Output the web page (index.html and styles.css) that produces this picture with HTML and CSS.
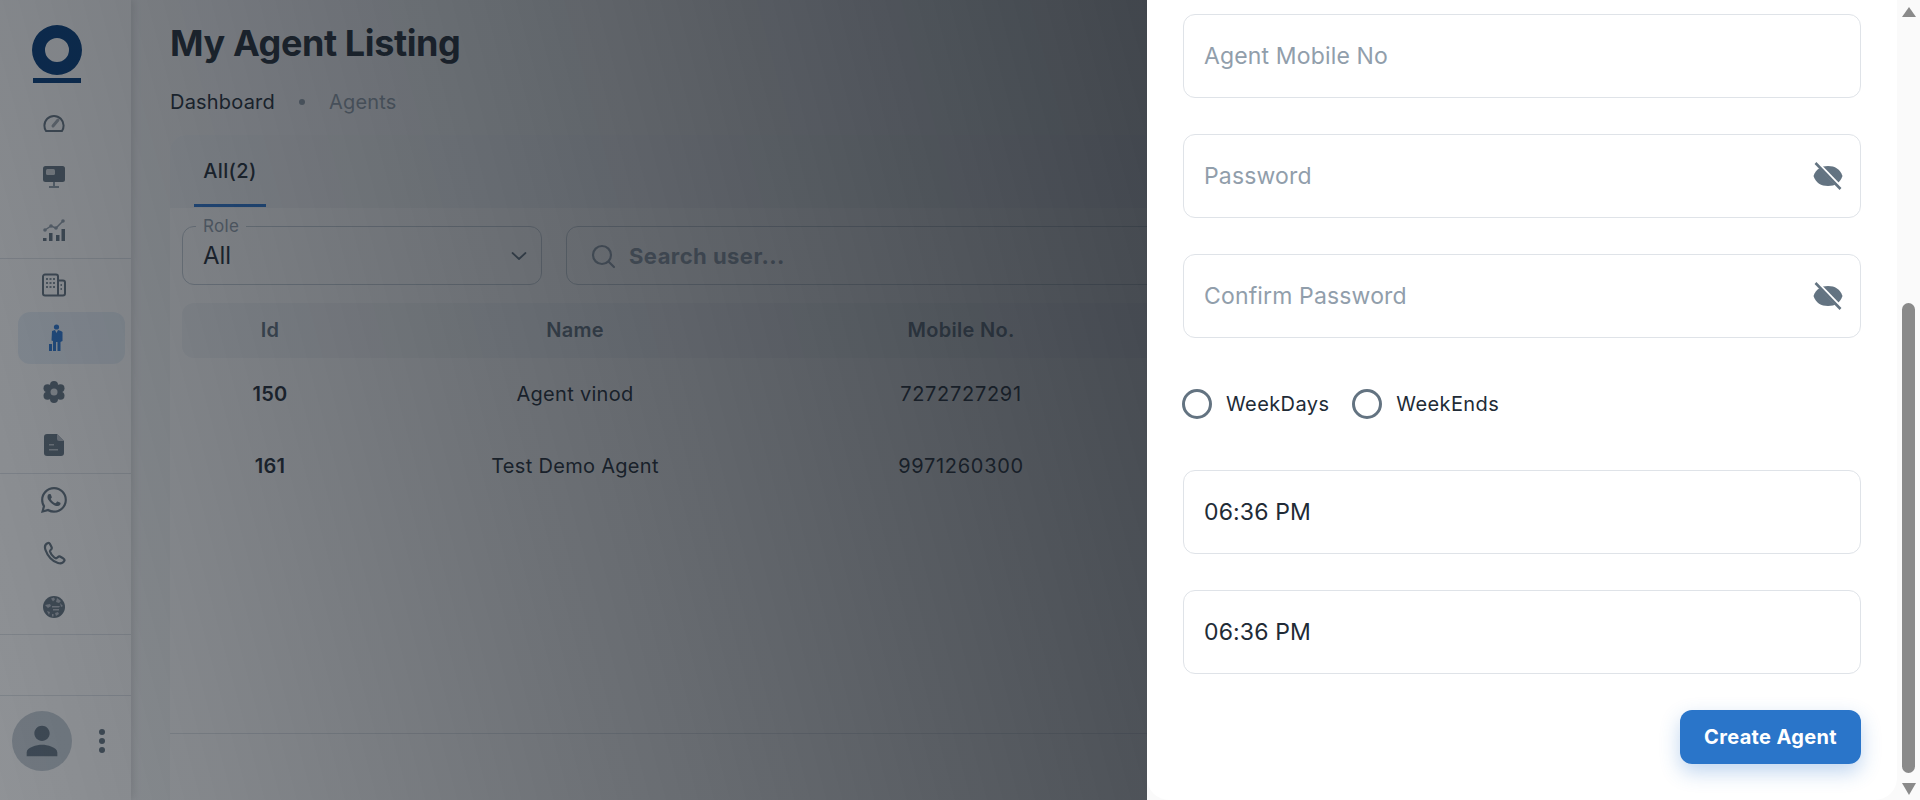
FILE: index.html
```html
<!DOCTYPE html>
<html lang="en">
<head>
    <meta charset="UTF-8">
    <meta name="viewport" content="width=device-width, initial-scale=1.0">
    <title>My Agent Listing</title>
    <link rel="stylesheet" href="styles.css">
</head>
<body>
    <div class="app">
        <aside class="sidebar">
            <div class="logo">
                <svg width="50" height="58" viewBox="0 0 50 58">
                    <path fill-rule="evenodd" d="M25 0a25 25 0 1 0 0 50a25 25 0 1 0 0-50zM25 13a12 12 0 1 1 0 24a12 12 0 1 1 0-24z"/>
                    <rect x="1" y="53" width="48" height="5"/>
                </svg>
            </div>

            <nav class="nav-group">
                <a class="nav-item">
                    <svg width="24" height="24" viewBox="0 0 24 24" fill="none" stroke="currentColor" stroke-width="2" stroke-linecap="round">
                        <path d="M4 20h16c1.2-1.6 1.6-3.6 1.6-5.4A9.6 9.6 0 1 0 2.4 14.6c0 1.8.4 3.800 1.600 5.400z"/>
                        <path d="M11 15l5-6" stroke="#a0a8b2" stroke-width="3"/>
                    </svg>
                </a>
                <a class="nav-item">
                    <svg width="24" height="24" viewBox="0 0 24 24">
                        <rect x="1" y="1" width="22" height="16" rx="2.500" fill="currentColor"/>
                        <rect x="4" y="4" width="9" height="6" rx="1.500" fill="#fff" opacity=".7"/>
                        <path d="M11 17h2v4h4v2H7v-2h4z" fill="#919eab"/>
                    </svg>
                </a>
                <a class="nav-item">
                    <svg width="24" height="24" viewBox="0 0 24 24">
                        <path d="M3 12l6-4 5 2 7-7" fill="none" stroke="#919eab" stroke-width="1.500"/>
                        <circle cx="3" cy="12" r="1.800" fill="#919eab"/><circle cx="9" cy="8" r="1.800" fill="#919eab"/>
                        <circle cx="14" cy="10" r="1.800" fill="#919eab"/><circle cx="21" cy="3" r="1.800" fill="#919eab"/>
                        <path d="M1 20h3.500v3H1zM7 15h3.500v8H7zM14 17h3.500v6H14zM19.500 11H23v12h-3.500z" fill="currentColor"/>
                    </svg>
                </a>
            </nav>

            <nav class="nav-group">
                <a class="nav-item">
                    <svg width="24" height="24" viewBox="0 0 24 24">
                        <path fill="none" stroke="currentColor" stroke-width="2" stroke-linejoin="round" d="M3 1.500h11a2 2 0 0 1 2 2v19H3a2 2 0 0 1-2-2v-17a2 2 0 0 1 2-2zM16 7.500h5a2 2 0 0 1 2 2v11a2 2 0 0 1-2 2h-5"/>
                        <path fill="currentColor" opacity=".8" d="M4 5h2v2H4zM7.500 5h2v2h-2zM11 5h2v2h-2zM4 9h2v2H4zM7.500 9h2v2h-2zM11 9h2v2h-2zM4 13h2v2H4zM7.500 13h2v2h-2zM11 13h2v2h-2zM18.500 11H20v2h-1.500zM18.500 15H20v2h-1.500z"/>
                    </svg>
                </a>
                <a class="nav-item active">
                    <svg width="14" height="28" viewBox="0 0 14 28" fill="currentColor">
                        <circle cx="7.500" cy="3" r="2.600"/>
                        <path d="M3 7l3-1 1.500 3L9 6l3 1 1.500 1v9l-2 1v9H8.500v-9H7v9H4v-10l-1.500-.5z"/>
                        <rect x="0" y="20" width="3" height="7"/>
                    </svg>
                </a>
                <a class="nav-item">
                    <svg width="24" height="24" viewBox="0 0 24 24" fill="currentColor">
                        <circle cx="12" cy="12" r="7.500"/>
                        <circle cx="12" cy="5" r="4"/><circle cx="12" cy="19" r="4"/>
                        <circle cx="5.500" cy="8.300" r="4"/><circle cx="18.500" cy="8.300" r="4"/>
                        <circle cx="5.500" cy="15.700" r="4"/><circle cx="18.500" cy="15.700" r="4"/>
                        <circle cx="12" cy="12" r="3.500" fill="#fff" opacity=".75"/>
                    </svg>
                </a>
                <a class="nav-item">
                    <svg width="24" height="24" viewBox="0 0 24 24">
                        <path fill="currentColor" d="M5 1h10l7 7v12a3 3 0 0 1-3 3H5a3 3 0 0 1-3-3V4a3 3 0 0 1 3-3z"/>
                        <path fill="#b6bdc6" d="M15 1l7 7h-5a2 2 0 0 1-2-2z"/>
                        <path fill="#b6bdc6" d="M7 11h5v1.500H7zM7 16h9v1.500H7z"/>
                    </svg>
                </a>
            </nav>

            <nav class="nav-group">
                <a class="nav-item">
                    <svg width="26" height="26" viewBox="0 0 16 16" fill="currentColor">
                        <path d="M13.601 2.326A7.854 7.854 0 0 0 7.994 0C3.627 0 .068 3.558.064 7.926c0 1.399.366 2.76 1.057 3.965L0 16l4.204-1.102a7.933 7.933 0 0 0 3.79.965h.004c4.368 0 7.926-3.558 7.93-7.93A7.898 7.898 0 0 0 13.6 2.326zM7.994 14.521a6.573 6.573 0 0 1-3.356-.92l-.24-.144-2.494.654.666-2.433-.156-.251a6.56 6.56 0 0 1-1.007-3.505c0-3.626 2.957-6.584 6.591-6.584a6.56 6.56 0 0 1 4.66 1.931 6.557 6.557 0 0 1 1.928 4.66c-.004 3.639-2.961 6.592-6.592 6.592zm3.615-4.934c-.197-.099-1.17-.578-1.353-.646-.182-.065-.315-.099-.445.099-.133.197-.513.646-.627.775-.114.133-.232.148-.43.05-.197-.1-.836-.308-1.592-.985-.59-.525-.985-1.175-1.103-1.372-.114-.198-.011-.304.088-.403.087-.088.197-.232.296-.346.1-.114.133-.198.198-.33.065-.134.034-.248-.015-.347-.05-.099-.445-1.076-.612-1.47-.16-.389-.323-.335-.445-.34-.114-.007-.247-.007-.38-.007a.729.729 0 0 0-.529.247c-.182.198-.691.677-.691 1.654 0 .977.71 1.916.81 2.049.098.133 1.394 2.132 3.383 2.992.47.205.84.326 1.129.418.475.152.904.129 1.246.08.38-.058 1.171-.48 1.338-.943.164-.464.164-.86.114-.943-.049-.084-.182-.133-.38-.232z"/>
                    </svg>
                </a>
                <a class="nav-item">
                    <svg width="24" height="24" viewBox="0 0 24 24" fill="none" stroke="currentColor" stroke-width="2.200" stroke-linejoin="round">
                        <path d="M6 2C3 3 2.500 6 3.500 9C5.500 15 10.500 20.500 16 22C19 22.800 21.500 21.500 22.500 19.500C22.800 18.500 22 18 21 17.300L18 15.500C17 15 16.500 15.500 15.500 16.500C14.500 17.500 13.500 17.500 12.300 16.500C10 14.500 8.500 12.500 8 10.500C7.800 9.500 8.500 9 9.300 8.300C10 7.500 10 7 9.500 6L8 3C7.500 2 7 1.700 6 2z"/>
                    </svg>
                </a>
                <a class="nav-item">
                    <svg width="22" height="22" viewBox="0 0 22 22">
                        <circle cx="11" cy="11" r="11" fill="currentColor"/>
                        <path fill="#b6bdc6" d="M8 2.500l3-1 1 2-2 2zM14 2l4 3-2 2-3-1zM2 9l5-1 1 2-3 2zM9 10h8l-1 1.500H9zM17 7l3 3-2 1zM10 13h6v1.500h-6zM4 15l3 1-1 3zM12 17l3-1 1 2-3 2zM9 18h1.500v2.500H9z"/>
                    </svg>
                </a>
            </nav>

            <div class="side-spacer"></div>

            <div class="side-user">
                <span class="avatar">
                    <svg width="46" height="46" viewBox="0 0 24 24" fill="currentColor">
                        <path d="M12 12c2.210 0 4-1.790 4-4s-1.790-4-4-4-4 1.790-4 4 1.790 4 4 4zm0 2c-2.670 0-8 1.340-8 4v2h16v-2c0-2.660-5.330-4-8-4z"/>
                    </svg>
                </span>
                <span class="dots"><i></i><i></i><i></i></span>
            </div>
        </aside>

        <main class="content">
            <h1>My Agent Listing</h1>
            <div class="breadcrumb">
                <span>Dashboard</span>
                <i class="crumb-dot"></i>
                <span class="crumb-muted">Agents</span>
            </div>

            <section class="card">
                <div class="tabs">
                    <span class="tab">All(2)</span>
                </div>

                <div class="filters">
                    <div class="role-select">
                        <span class="role-label">Role</span>
                        <span>All</span>
                        <svg width="20" height="20" viewBox="0 0 20 20" fill="none" stroke="currentColor" stroke-width="1.800" stroke-linecap="round" stroke-linejoin="round"><path d="M3.500 7l6.500 6 6.500-6"/></svg>
                    </div>
                    <div class="search-box">
                        <svg width="26" height="26" viewBox="0 0 26 26" fill="none" stroke="currentColor" stroke-width="2.200" stroke-linecap="round"><circle cx="12" cy="12" r="9"/><path d="M19 19l5 5"/></svg>
                        <span>Search user...</span>
                    </div>
                </div>

                <div class="table-head table-row">
                    <span>Id</span>
                    <span>Name</span>
                    <span>Mobile No.</span>
                </div>
                <div class="table-row body-row">
                    <b>150</b>
                    <span>Agent vinod</span>
                    <span class="num">7272727291</span>
                </div>
                <div class="table-row body-row">
                    <b>161</b>
                    <span>Test Demo Agent</span>
                    <span class="num">9971260300</span>
                </div>

                <div class="table-foot"></div>
            </section>
        </main>
    </div>

    <div class="backdrop"></div>

    <div class="drawer">
        <form class="drawer-body">
            <div class="field"><span class="placeholder">Agent Mobile No</span></div>
            <div class="field">
                <span class="placeholder">Password</span>
                <svg width="32" height="28" viewBox="0 0 32 28">
                    <path fill="#637381" d="M1.500 14C4 7 9 4 16 4s12 3 14.500 10C28 21 23 24 16 24S4 21 1.500 14z"/>
                    <path d="M5 1l25 26" stroke="#fff" stroke-width="4"/>
                    <path d="M3.500 1l25 26" stroke="#637381" stroke-width="2.600"/>
                </svg>
            </div>
            <div class="field">
                <span class="placeholder">Confirm Password</span>
                <svg width="32" height="28" viewBox="0 0 32 28">
                    <path fill="#637381" d="M1.500 14C4 7 9 4 16 4s12 3 14.500 10C28 21 23 24 16 24S4 21 1.500 14z"/>
                    <path d="M5 1l25 26" stroke="#fff" stroke-width="4"/>
                    <path d="M3.500 1l25 26" stroke="#637381" stroke-width="2.600"/>
                </svg>
            </div>

            <div class="radios">
                <label class="radio"><i></i>WeekDays</label>
                <label class="radio"><i></i>WeekEnds</label>
            </div>

            <div class="field">06:36 PM</div>
            <div class="field">06:36 PM</div>

            <div class="actions">
                <button type="button" class="create-btn">Create Agent</button>
            </div>
        </form>
        <div class="scroll-track">
            <span class="arrow-up"></span>
            <span class="scroll-thumb"></span>
            <span class="arrow-down"></span>
        </div>
    </div>
</body>
</html>
```

FILE: styles.css
```css
* {
    box-sizing: border-box;
}
body {
    margin: 0;
    height: 800px;
    overflow: hidden;
    font-family: Inter, "Liberation Sans", sans-serif;
    color: #212b36;
    background: #f7f8f9;
}
.app {
    display: flex;
    height: 800px;
}

/* sidebar */
.sidebar {
    width: 131px;
    flex-shrink: 0;
    background: #fff;
    display: flex;
    flex-direction: column;
    box-shadow: 2px 0 8px rgba(0, 0, 0, 0.12);
    position: relative;
}
.logo {
    padding: 25px 0 0 32px;
    height: 97px;
}
.logo svg {
    display: block;
    fill: #003a7a;
}
.nav-group {
    display: flex;
    flex-direction: column;
    gap: 1.5px;
    padding: 0 6px 1.5px 18px;
    border-bottom: 1px solid #dfe3e8;
}
.nav-item {
    height: 52px;
    width: 107px;
    display: grid;
    grid-template-columns: 72px;
    justify-items: center;
    align-items: center;
    color: #637381;
    border-radius: 12px;
}
.nav-item.active {
    background: rgba(42, 117, 201, 0.1);
    color: #2a75d0;
}
.nav-item.active svg {
    margin-left: 3px;
}
.side-spacer {
    height: 61px;
    border-bottom: 1px solid #dfe3e8;
    flex-shrink: 0;
}
.side-user {
    display: flex;
    align-items: center;
    padding: 15px 0 0 12px;
    gap: 27px;
}
.avatar {
    width: 60px;
    height: 60px;
    border-radius: 50%;
    background: #c4cdd5;
    color: #637381;
    display: flex;
    align-items: center;
    justify-content: center;
}
.dots {
    display: flex;
    flex-direction: column;
    gap: 3px;
}
.dots i {
    width: 6px;
    height: 6px;
    border-radius: 50%;
    background: #637381;
}

/* main content */
.content {
    flex: 1;
    min-width: 0;
    padding: 0 30px 0 39px;
}
h1 {
    margin: 0;
    padding-top: 22px;
    font-size: 36px;
    line-height: 42px;
    font-weight: 700;
    letter-spacing: -0.4px;
}
.breadcrumb {
    margin-top: 24px;
    display: flex;
    align-items: center;
    height: 28px;
    font-size: 20px;
    letter-spacing: 0.2px;
}
.crumb-dot {
    width: 6px;
    height: 6px;
    border-radius: 50%;
    background: #919eab;
    margin: 0 24px;
}
.crumb-muted {
    color: #919eab;
}
.card {
    margin-top: 19px;
    height: 700px;
    background: #fff;
    border-radius: 16px;
    overflow: hidden;
}
.tabs {
    height: 73px;
    padding-left: 24px;
    background: #f4f6f8;
    display: flex;
}
.tab {
    width: 72px;
    text-align: center;
    font-size: 20px;
    font-weight: 500;
    line-height: 72px;
    border-bottom: 3px solid #2a75d0;
    height: 72px;
    letter-spacing: 0.4px;
}
.filters {
    display: flex;
    gap: 24px;
    padding: 18px 12px;
}
.role-select {
    position: relative;
    width: 360px;
    height: 59px;
    border: 1px solid #c4cdd5;
    border-radius: 12px;
    display: flex;
    align-items: center;
    justify-content: space-between;
    padding: 0 12px 0 20px;
    font-size: 24px;
}
.role-select svg {
    color: #637381;
}
.role-label {
    position: absolute;
    left: 13px;
    top: -10px;
    padding: 0 7px;
    background: #fff;
    color: #919eab;
    font-size: 17px;
    letter-spacing: 0.3px;
    line-height: 18px;
}
.search-box {
    flex: 1;
    height: 59px;
    border: 1px solid #c4cdd5;
    border-radius: 12px;
    display: flex;
    align-items: center;
    gap: 13px;
    padding: 1px 0 0 23px;
    color: #919eab;
    font-size: 22px;
    font-weight: 700;
    letter-spacing: 0.45px;
}
.search-box svg {
    color: #919eab;
}
.table-row {
    display: grid;
    grid-template-columns: 176px 434px 338px;
    margin: 0 12px;
    align-items: center;
    text-align: center;
}
.table-row span,
.table-row b {
    display: block;
}
.table-head {
    height: 55px;
    padding-bottom: 1px;
    background: #f4f6f8;
    border-radius: 12px;
    color: #637381;
    font-size: 20px;
    font-weight: 600;
    letter-spacing: 0.3px;
}
.body-row {
    height: 72px;
    font-size: 20px;
    letter-spacing: 0.3px;
}
.body-row b {
    font-weight: 600;
}
.body-row .num {
    letter-spacing: 0.7px;
}
.table-foot {
    margin-top: 231px;
    border-top: 1px solid #dfe3e8;
}

/* overlay + drawer */
.backdrop {
    position: fixed;
    inset: 0;
    background: linear-gradient(75deg, rgba(22, 28, 36, 0.48) 0%, rgb(22, 28, 36) 100%);
}
.drawer {
    position: fixed;
    top: 0;
    right: 0;
    bottom: 0;
    width: 773px;
    display: flex;
    background: #fafafa;
}
.drawer-body {
    width: 750px;
    height: 800px;
    background: #fff;
    border-radius: 0 0 22px 22px;
    padding: 14px 36px 0 36px;
    display: flex;
    flex-direction: column;
}
.field {
    flex-shrink: 0;
    height: 84px;
    margin-bottom: 36px;
    border: 1px solid #dfe3e8;
    border-radius: 12px;
    display: flex;
    align-items: center;
    justify-content: space-between;
    padding: 0 16px 0 20px;
    font-size: 23px;
    letter-spacing: 0.15px;
}
.placeholder {
    color: #919eab;
}
.radios {
    height: 132px;
    margin-top: -36px;
    margin-left: -1px;
    flex-shrink: 0;
    display: flex;
    align-items: center;
    gap: 23px;
}
.radio {
    display: flex;
    align-items: center;
    gap: 14px;
    font-size: 20px;
    letter-spacing: 0.4px;
}
.radio i {
    width: 30px;
    height: 30px;
    border: 3px solid #637381;
    border-radius: 50%;
}
.actions {
    display: flex;
    justify-content: flex-end;
}
.create-btn {
    width: 181px;
    height: 54px;
    border: none;
    border-radius: 12px;
    background: #2a75c9;
    color: #fff;
    font-family: inherit;
    font-size: 20px;
    font-weight: 700;
    letter-spacing: 0.35px;
    box-shadow: 0 8px 20px rgba(42, 117, 201, 0.3);
}
.scroll-track {
    width: 23px;
    padding: 7px 0 0 5px;
    display: flex;
    flex-direction: column;
}
.arrow-up,
.arrow-down {
    width: 0;
    height: 0;
    border-left: 7px solid transparent;
    border-right: 7px solid transparent;
}
.arrow-up {
    border-bottom: 10px solid #8a8a8a;
}
.arrow-down {
    border-top: 12px solid #8a8a8a;
    margin-top: 10px;
}
.scroll-thumb {
    width: 13px;
    height: 470px;
    margin-top: 286px;
    background: #8a8a8a;
    border-radius: 7px;
}
```
